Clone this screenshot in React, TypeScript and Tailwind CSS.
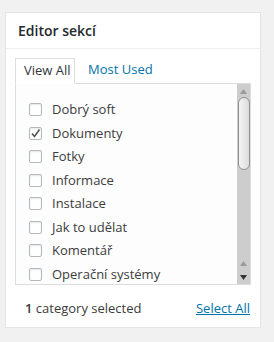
import { useState } from "react";

const categories = [
  { label: "Dobrý soft", checked: false },
  { label: "Dokumenty", checked: true },
  { label: "Fotky", checked: false },
  { label: "Informace", checked: false },
  { label: "Instalace", checked: false },
  { label: "Jak to udělat", checked: false },
  { label: "Komentář", checked: false },
  { label: "Operační systémy", checked: false },
];

function Checkbox({ checked }: { checked: boolean }) {
  return (
    <span className="flex h-[13px] w-[13px] shrink-0 items-center justify-center rounded-[2px] border border-[#b4b9be] bg-white shadow-[inset_0_1px_2px_rgba(0,0,0,0.1)]">
      {checked && (
        <svg width="11" height="11" viewBox="0 0 11 11">
          <path d="M2 5.5 L4.5 8.5 L9.5 1.5" fill="none" stroke="#555" strokeWidth="1.6" />
        </svg>
      )}
    </span>
  );
}

function Scrollbar() {
  return (
    <div className="flex w-[13px] shrink-0 flex-col items-center bg-[#cdcdcd]">
      <svg width="7" height="5" viewBox="0 0 7 5" className="mt-[5px]">
        <path d="M3.5 0 L7 5 L0 5 Z" fill="#9a9a9a" />
      </svg>
      <div className="mt-[3px] h-[73px] w-[12px] rounded-full border border-[#8f8f8f] bg-gradient-to-r from-[#f4f4f4] to-[#dcdcdc]" />
      <div className="flex-1" />
      <svg width="7" height="5" viewBox="0 0 7 5" className="mb-[9px]">
        <path d="M3.5 0 L7 5 L0 5 Z" fill="#9a9a9a" />
      </svg>
      <svg width="7" height="5" viewBox="0 0 7 5" className="mb-[4px]">
        <path d="M0 0 L7 0 L3.5 5 Z" fill="#333" />
      </svg>
    </div>
  );
}

export default function App() {
  const [tab, setTab] = useState("all");

  return (
    <div
      className="h-[342px] w-[274px] bg-[#f1f1f1] pt-[12px] pl-[5px]"
      style={{ fontFamily: '"Open Sans", "Noto Sans", sans-serif' }}
    >
      <div className="h-[316px] w-[256px] border border-[#e5e5e5] bg-white">
        <div className="flex h-[36px] items-center border-b border-[#eeeeee] px-[12px]">
          <h2 className="text-[14px] font-semibold text-[#23282d]">Editor sekcí</h2>
        </div>

        <div className="px-[9px] pt-[8px]">
          <div className="flex h-[26px] items-end text-[13px]">
            <button
              onClick={() => setTab("all")}
              className="relative -mb-px flex h-[26px] w-[60px] items-center border border-b-white border-[#dddddd] bg-white pl-[8px] text-[#32373c]"
            >
              View All
            </button>
            <button
              onClick={() => setTab("used")}
              className="flex h-[26px] items-center pl-[13px] text-[#0073aa]"
            >
              Most Used
            </button>
          </div>

          <div className="flex h-[202px] border border-[#dddddd] bg-[#fdfdfd]">
            <ul className="flex-1 overflow-hidden pt-[14px] pl-[13px] text-[13px] text-[#3c3c3c]">
              {categories.map(({ label, checked }) => (
                <li key={label} className="flex h-[23.5px] items-center gap-[10px]">
                  <Checkbox checked={tab === "all" && checked} />
                  <span className="whitespace-nowrap">{label}</span>
                </li>
              ))}
            </ul>
            <Scrollbar />
          </div>

          <div className="flex items-center justify-between pt-[14px] pr-px pl-[10px] text-[13px] text-[#3c3c3c]">
            <span>
              <b className="font-semibold">1</b> category selected
            </span>
            <a href="#" className="text-[#0073aa] underline">
              Select All
            </a>
          </div>
        </div>
      </div>
    </div>
  );
}
